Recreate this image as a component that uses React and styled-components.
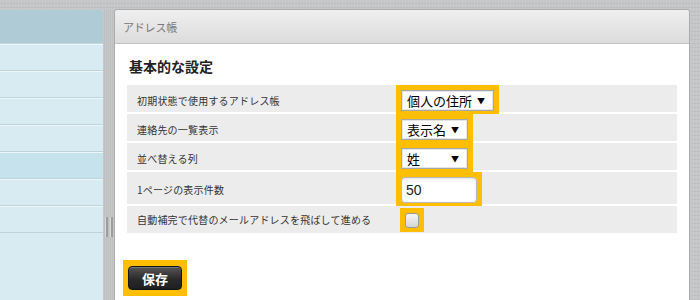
import React from "react";
import styled, { createGlobalStyle } from "styled-components";

const Global = createGlobalStyle`
  html, body { margin: 0; padding: 0; }
  body {
    width: 700px;
    height: 300px;
    overflow: hidden;
    font-family: "Noto Sans CJK JP", "Noto Sans", sans-serif;
    background-color: #c4c6c8;
    background-image:
      repeating-linear-gradient(90deg, rgba(255,255,255,0.07) 0 1px, transparent 1px 3px),
      repeating-linear-gradient(0deg, rgba(0,0,0,0.04) 0 1px, transparent 1px 4px);
  }
`;

const Page = styled.div`
  display: flex;
  align-items: stretch;
  height: 300px;
  padding-top: 10px;
  box-sizing: border-box;
`;

const Sidebar = styled.div`
  width: 103px;
  flex: none;
  display: flex;
  flex-direction: column;
  background: #d9ebf2;
  border-top-right-radius: 3px;
  overflow: hidden;
`;

const SideHeader = styled.div`
  height: 34px;
  flex: none;
  background: #afcbd6;
  border-bottom: 1px solid #c2d7df;
  box-sizing: border-box;
`;

const SideRow = styled.div`
  height: 27px;
  flex: none;
  box-sizing: border-box;
  background: ${(p) => (p.$active ? "#c6e2ec" : "#d9ebf2")};
  box-shadow: inset 0 1px 0 #eef6f9;
  border-bottom: 1px solid #bfd3db;
`;

const Splitter = styled.div`
  width: 12px;
  flex: none;
  display: flex;
  justify-content: center;
  gap: 2px;
  padding-top: 207px;
  box-sizing: border-box;
  background-color: #bdbfc1;
  background-image: repeating-linear-gradient(90deg, rgba(255,255,255,0.12) 0 1px, transparent 1px 2px);
`;

const Grip = styled.div`
  width: 2px;
  height: 20px;
  background: #9a9c9e;
  border-left: 1px solid #d8d9da;
`;

const Panel = styled.div`
  width: 574px;
  flex: none;
  margin-right: 11px;
  background: #fff;
  border-radius: 3px 3px 0 0;
  box-shadow: 0 0 0 1px #a9abad;
  display: flex;
  flex-direction: column;
`;

const PanelHeader = styled.div`
  height: 34px;
  box-sizing: border-box;
  border-bottom: 1px solid #c4c4c4;
  background: linear-gradient(#efefef, #dcdcdc);
  border-radius: 3px 3px 0 0;
  display: flex;
  align-items: center;
  padding-left: 8px;
  font-size: 11px;
  letter-spacing: -0.2px;
  color: #787878;
`;

const PanelBody = styled.div`
  padding: 12px 12px 0 12px;
`;

const Heading = styled.div`
  font-size: 14px;
  font-weight: bold;
  line-height: 20px;
  color: #222;
  padding-left: 2px;
  margin-bottom: 9px;
`;

const Rows = styled.div`
  display: flex;
  flex-direction: column;
  gap: 2px;
`;

const Row = styled.div`
  display: grid;
  grid-template-columns: 269px 1fr;
  align-items: center;
  height: ${(p) => p.$h || 27}px;
  background: #ececec;
`;

const Label = styled.div`
  padding-left: 10px;
  font-size: 10px;
  letter-spacing: 0.2px;
  color: #333;
  white-space: nowrap;
`;

const Control = styled.div`
  display: flex;
  align-items: center;
  padding-left: ${(p) => p.$offset || 0}px;
`;

const Highlight = styled.div`
  background: #ffbf00;
  padding: 5px 5px 4px 5px;
  display: flex;
`;

const SelectBox = styled.div`
  width: ${(p) => p.$w}px;
  height: 21px;
  box-sizing: border-box;
  background: #fff;
  border: 1px solid #a8a8a8;
  box-shadow: inset 0 0 0 1px #e4e4e4;
  display: flex;
  align-items: center;
  justify-content: space-between;
  padding: 0 8px 0 5px;
  font-size: 13px;
  color: #000;
`;

const Arrow = styled.span`
  font-size: 8px;
  color: #000;
`;

const TextInput = styled.input`
  width: 76px;
  height: 26px;
  box-sizing: border-box;
  border: 1px solid #b9b9b9;
  border-radius: 4px;
  box-shadow: inset 0 1px 2px rgba(0,0,0,0.12);
  background: #fff;
  padding: 0 4px;
  font-family: "Liberation Sans", Arial, sans-serif;
  font-size: 14px;
  color: #222;
  outline: none;
`;

const CheckBox = styled.div`
  width: 14px;
  height: 15px;
  box-sizing: border-box;
  border: 1px solid #9a9a9a;
  border-radius: 3px;
  background: linear-gradient(#f6f6f6, #d6d6d6);
`;

const SaveWrap = styled.div`
  display: inline-flex;
  margin: 27px 0 0 -4px;
  padding: 6px 5px;
  background: #ffbf00;
`;

const SaveButton = styled.button`
  width: 54px;
  height: 24px;
  border: 1px solid #151515;
  border-radius: 4px;
  background: linear-gradient(#555, #2a2a2a 55%, #1f1f1f);
  box-shadow: inset 0 1px 0 rgba(255,255,255,0.2);
  color: #fff;
  font-family: "Noto Sans CJK JP", sans-serif;
  font-size: 13px;
  font-weight: bold;
  padding: 0;
  line-height: 1;
`;

const settings = [
  { label: "初期状態で使用するアドレス帳", type: "select", value: "個人の住所", w: 93 },
  { label: "連絡先の一覧表示", type: "select", value: "表示名", w: 67 },
  { label: "並べ替える列", type: "select", value: "姓", w: 67 },
  { label: "1ページの表示件数", type: "input", value: "50", h: 32 },
  { label: "自動補完で代替のメールアドレスを飛ばして進める", type: "check", offset: 4 },
];

export default function App() {
  return (
    <>
      <Global />
      <Page>
        <Sidebar>
          <SideHeader />
          {[0, 1, 2, 3, 4, 5, 6].map((i) => (
            <SideRow key={i} $active={i === 4} />
          ))}
        </Sidebar>
        <Splitter>
          <Grip />
          <Grip />
        </Splitter>
        <Panel>
          <PanelHeader>アドレス帳</PanelHeader>
          <PanelBody>
            <Heading>基本的な設定</Heading>
            <Rows>
              {settings.map((s) => (
                <Row key={s.label} $h={s.h}>
                  <Label>{s.label}</Label>
                  <Control $offset={s.offset}>
                    <Highlight>
                      {s.type === "select" && (
                        <SelectBox $w={s.w}>
                          <span>{s.value}</span>
                          <Arrow>▼</Arrow>
                        </SelectBox>
                      )}
                      {s.type === "input" && <TextInput defaultValue={s.value} />}
                      {s.type === "check" && <CheckBox />}
                    </Highlight>
                  </Control>
                </Row>
              ))}
            </Rows>
            <SaveWrap>
              <SaveButton>保存</SaveButton>
            </SaveWrap>
          </PanelBody>
        </Panel>
      </Page>
    </>
  );
}
